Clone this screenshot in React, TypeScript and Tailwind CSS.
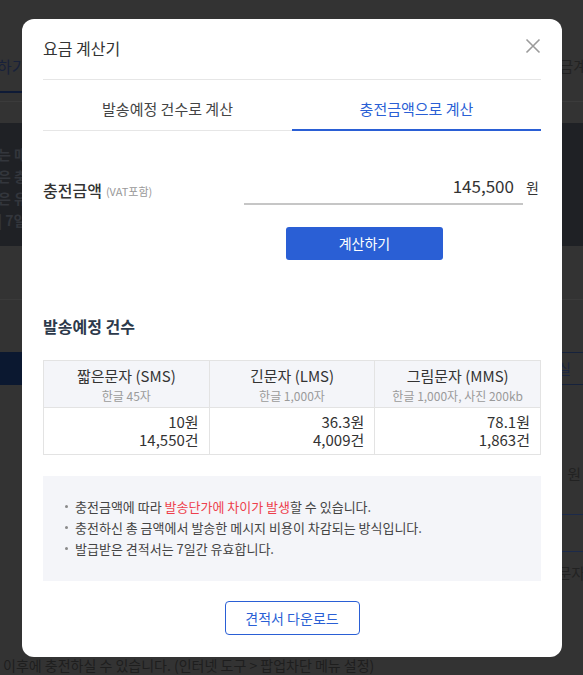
import React from 'react';

const font = { fontFamily: '"Noto Sans CJK KR", "Noto Sans", sans-serif' };

const columns = [
  { name: '짧은문자 (SMS)', desc: '한글 45자', price: '10원', count: '14,550건' },
  { name: '긴문자 (LMS)', desc: '한글 1,000자', price: '36.3원', count: '4,009건' },
  { name: '그림문자 (MMS)', desc: '한글 1,000자, 사진 200kb', price: '78.1원', count: '1,863건' },
];

const CloseIcon = () => (
  <svg width="16" height="16" viewBox="0 0 16 16" fill="none">
    <path d="M1.5 1.5 L14.5 14.5 M14.5 1.5 L1.5 14.5" stroke="#9b9b9b" strokeWidth="1.6" />
  </svg>
);

// page behind the dimmed overlay
const Backdrop = () => (
  <div className="flex flex-col h-[675px] bg-[#333333] text-[#1e1e1e]">
    <div className="h-[40px]" />
    <div className="h-[53px] flex justify-between items-center">
      <div className="h-full flex flex-col justify-center border-b-2 border-[#0e1a36] w-[40px]">
        <span className="-ml-[3px] text-[16px] text-[#18213a]">하기</span>
      </div>
      <span className="text-[15px] text-[#222] -mr-[4px]">금계</span>
    </div>
    <div className="h-[8px]" />
    <div className="h-[22px] border-t border-[#3b3b3b]" />
    <div className="h-[123px] bg-[#1f2125] flex flex-col pt-[23px] gap-[5px] text-[14px] font-bold text-[#33363c] leading-[17px]">
      <span className="-ml-[2px]">는 매</span>
      <span className="-ml-[2px]">은 충</span>
      <span className="-ml-[2px]">은 유</span>
      <span className="-ml-[2px]">| 7일</span>
    </div>
    <div className="h-[53px]" />
    <div className="h-[53px] border-t border-[#3a3a3a]" />
    <div className="h-[33px] flex justify-between">
      <div className="w-[40px] bg-[#0b1830]" />
      <div className="w-[30px] border-y border-l border-[#16223c] flex items-center pl-[4px] text-[14px] text-[#1c2640]">실</div>
    </div>
    <div className="h-[78px]" />
    <div className="flex justify-end pr-[2px] text-[15px] text-[#222]">원</div>
    <div className="h-[28px]" />
    <div className="flex justify-end">
      <div className="w-[35px] h-[38px] rounded-l-[4px] border border-r-0 border-[#1c2a4a]" />
    </div>
    <div className="h-[10px]" />
    <div className="flex justify-end -mr-[2px] text-[15px] text-[#222]">문자</div>
    <div className="flex-1" />
    <div className="h-[18px] pl-[3px] text-[14px] leading-[16px] text-[#1e1e1e]">
      이후에 충전하실 수 있습니다. (인터넷 도구 &gt; 팝업차단 메뉴 설정)
    </div>
  </div>
);

export default function App() {
  return (
    <div className="relative w-[583px] h-[675px] overflow-hidden" style={font}>
      <Backdrop />

      <div className="absolute left-[22px] top-[19px] w-[540px] h-[638px] rounded-[12px] bg-white px-[21px] flex flex-col">
        {/* header */}
        <div className="pt-[17px] pb-[19px] border-b border-[#e6e6e6] flex justify-between items-center">
          <h2 className="text-[16px] leading-[24px] text-[#333]">요금 계산기</h2>
          <button className="-mt-[4px]">
            <CloseIcon />
          </button>
        </div>

        {/* tabs */}
        <div className="mt-[9px] grid grid-cols-2 text-[15px]">
          <button className="h-[42px] border-b border-[#e6e6e6] text-[#444]">발송예정 건수로 계산</button>
          <button className="h-[42px] border-b-2 border-[#2a5fd5] text-[#2a5fd5]">충전금액으로 계산</button>
        </div>

        {/* amount */}
        <div className="mt-[44px] flex items-start">
          <div className="w-[201px] h-[30px] flex items-center">
            <span className="text-[16px] text-[#333] font-medium">충전금액</span>
            <span className="ml-[4px] text-[11px] text-[#999] mt-[2px]">(VAT포함)</span>
          </div>
          <div className="w-[279px] h-[30px] border-b-2 border-[#c6c6c6] flex items-center justify-end pr-[9px] pb-[7px] text-[17px] text-[#333]">
            145,500
          </div>
          <span className="ml-[3px] text-[14px] leading-[24px] text-[#333]">원</span>
        </div>

        <button className="mt-[22px] ml-[243px] w-[157px] h-[33px] rounded-[3px] bg-[#2a5fd5] text-white text-[14px]">
          계산하기
        </button>

        {/* result */}
        <h3 className="mt-[54px] text-[16px] leading-[24px] font-bold text-[#2d3a4b]">발송예정 건수</h3>

        <div className="mt-[22px] grid grid-cols-3 border-t border-l border-[#e3e3e3]">
          {columns.map(c => (
            <div key={c.name} className="flex flex-col border-r border-[#e3e3e3]">
              <div className="bg-[#f4f5f9] border-b border-[#e3e3e3] pt-[5px] pb-[3px] flex flex-col items-center">
                <span className="text-[15px] leading-[20px] text-[#333]">{c.name}</span>
                <span className="mt-[2px] text-[12px] leading-[16px] text-[#9a9a9a]">{c.desc}</span>
              </div>
              <div className="border-b border-[#e3e3e3] pt-[5px] pb-[5px] pr-[10px] text-right text-[15px] leading-[18px] text-[#333]">
                {c.price}
                <br />
                {c.count}
              </div>
            </div>
          ))}
        </div>

        {/* notice */}
        <ul className="mt-[21px] bg-[#f4f5f9] pt-[20px] pb-[22px] pl-[22px] text-[13px] leading-[21px] text-[#444]">
          <li className="flex items-center">
            <span className="w-[3px] h-[3px] rounded-full bg-[#8a8a8a] mr-[7px]" />
            <span>
              충전금액에 따라 <span className="text-[#ee3f4c]">발송단가에 차이가 발생</span>할 수 있습니다.
            </span>
          </li>
          <li className="flex items-center">
            <span className="w-[3px] h-[3px] rounded-full bg-[#8a8a8a] mr-[7px]" />
            <span>충전하신 총 금액에서 발송한 메시지 비용이 차감되는 방식입니다.</span>
          </li>
          <li className="flex items-center">
            <span className="w-[3px] h-[3px] rounded-full bg-[#8a8a8a] mr-[7px]" />
            <span>발급받은 견적서는 7일간 유효합니다.</span>
          </li>
        </ul>

        <div className="mt-[20px] flex justify-center">
          <button className="w-[135px] h-[34px] rounded-[4px] border border-[#2a5fd5] text-[#2a5fd5] text-[14px]">
            견적서 다운로드
          </button>
        </div>
      </div>
    </div>
  );
}
